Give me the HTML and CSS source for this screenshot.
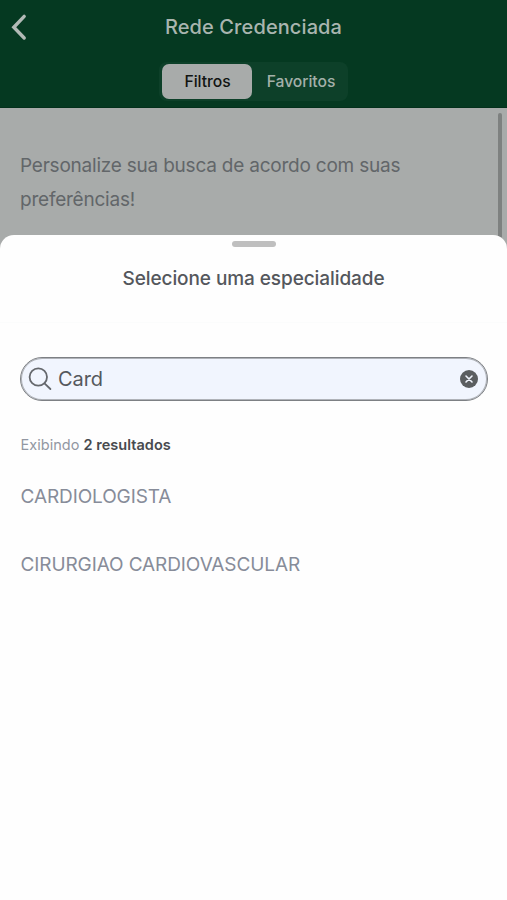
FILE: index.html
```html
<!DOCTYPE html>
<html lang="pt-BR">
<head>
  <meta charset="UTF-8">
  <meta name="viewport" content="width=device-width, initial-scale=1.0">
  <title>Rede Credenciada</title>
  <link rel="stylesheet" href="styles.css">
</head>
<body>
  <div class="app">
    <header class="header">
      <div class="title-bar">
        <svg class="back" viewBox="0 0 16 28" width="16" height="28">
          <path d="M13.2 3.4 L2.8 14.2 L13.2 25"/>
        </svg>
        <h1 class="title">Rede Credenciada</h1>
      </div>
      <nav class="tabs">
        <span class="tab active">Filtros</span>
        <span class="tab">Favoritos</span>
      </nav>
    </header>

    <main class="page">
      <p class="intro">Personalize sua busca de acordo com suas<br>preferências!</p>
      <div class="scrollbar"></div>
    </main>

    <section class="sheet">
      <div class="handle"></div>
      <h2 class="sheet-title">Selecione uma especialidade</h2>
      <div class="search">
        <svg class="search-icon" viewBox="0 0 24 24" width="24" height="24">
          <circle cx="10.3" cy="10" r="8.7"/>
          <path d="M16.5 16.3 L22.4 22"/>
        </svg>
        <span class="search-text">Card</span>
        <svg class="clear" viewBox="0 0 18 18" width="18" height="18">
          <circle cx="9" cy="9" r="9"/>
          <path d="M6 6 L12 12 M12 6 L6 12"/>
        </svg>
      </div>
      <p class="count">Exibindo <b>2 resultados</b></p>
      <ul class="results">
        <li>CARDIOLOGISTA</li>
        <li>CIRURGIAO CARDIOVASCULAR</li>
      </ul>
    </section>
  </div>
</body>
</html>
```

FILE: styles.css
```css
body {
  margin: 0;
  font-family: Inter, "Liberation Sans", sans-serif;
  background: #a8abaa;
}
h1, h2, p, ul {
  margin: 0;
  padding: 0;
}
.app {
  display: flex;
  flex-direction: column;
  height: 900px;
  overflow: hidden;
}
.header {
  box-sizing: border-box;
  height: 108px;
  flex: none;
  background: #053921;
  border-bottom: 1px solid #03301b;
}
.title-bar {
  display: grid;
  grid-template-columns: 40px 1fr 40px;
  align-items: center;
  height: 54px;
}
.back {
  margin-left: 11px;
  fill: none;
  stroke: #b2bab6;
  stroke-width: 3.4;
  stroke-linecap: round;
}
.title {
  text-align: center;
  font-size: 20px;
  line-height: 24px;
  font-weight: 500;
  letter-spacing: 0.1px;
  color: #a9b5af;
}
.tabs {
  box-sizing: border-box;
  display: flex;
  width: 189px;
  height: 39px;
  margin: 8px auto 0;
  padding: 2px 1px 2px 3px;
  border-radius: 8px;
  background: #0d4029;
}
.tab {
  flex: 1;
  display: flex;
  align-items: center;
  justify-content: center;
  padding-left: 3px;
  font-size: 15.7px;
  font-weight: 500;
  letter-spacing: -0.05px;
  color: #a3b0a9;
}
.tab.active {
  box-sizing: border-box;
  flex: 0 0 90px;
  padding-left: 1px;
  border-radius: 7px;
  background: #a8abaa;
  color: #111412;
}
.page {
  display: flex;
  justify-content: space-between;
  height: 127px;
  flex: none;
}
.intro {
  padding: 41px 0 0 20px;
  font-size: 19px;
  line-height: 34px;
  letter-spacing: -0.22px;
  color: #626669;
  white-space: nowrap;
}
.scrollbar {
  width: 4px;
  height: 140px;
  margin: 5px 5px 0 0;
  border-radius: 2px;
  background: #7e8180;
}
.sheet {
  flex: 1;
  position: relative;
  padding: 6px 20px 0;
  border-radius: 14px 14px 0 0;
  background: #fefefe;
}
.handle {
  width: 44px;
  height: 6px;
  margin: 0 auto;
  border-radius: 3px;
  background: #bfbfbf;
}
.sheet-title {
  margin: 20px -20px 0;
  padding-bottom: 31px;
  border-bottom: 1px solid #fbfcfc;
  text-align: center;
  font-size: 19px;
  line-height: 24px;
  font-weight: 500;
  letter-spacing: -0.08px;
  color: #54575c;
}
.search {
  box-sizing: border-box;
  display: flex;
  align-items: center;
  width: 468px;
  height: 44px;
  margin-top: 34px;
  padding: 0 9px 0 7px;
  border: 1px solid #7d8084;
  border-radius: 22px;
  background: #f1f5fe;
  box-shadow: inset 0 0 0 1px #b0b3b9;
}
.search-icon {
  fill: none;
  stroke: #65686d;
  stroke-width: 1.8;
  stroke-linecap: round;
}
.search-text {
  flex: 1;
  padding-left: 6px;
  font-size: 20px;
  letter-spacing: -0.1px;
  color: #55585d;
}
.clear {
  fill: #5b5e60;
}
.clear path {
  stroke: #f1f5fe;
  stroke-width: 1.6;
  stroke-linecap: round;
}
.count {
  margin-top: 34px;
  padding-left: 0.5px;
  font-size: 14.5px;
  line-height: 20px;
  letter-spacing: 0.03px;
  color: #9297a2;
}
.count b {
  font-weight: 600;
  color: #484a4f;
}
.results {
  margin-top: 7px;
  padding-left: 0.5px;
  list-style: none;
  font-size: 19px;
  letter-spacing: -0.1px;
  color: #878c99;
}
.results li {
  height: 68px;
  line-height: 69px;
}
```
